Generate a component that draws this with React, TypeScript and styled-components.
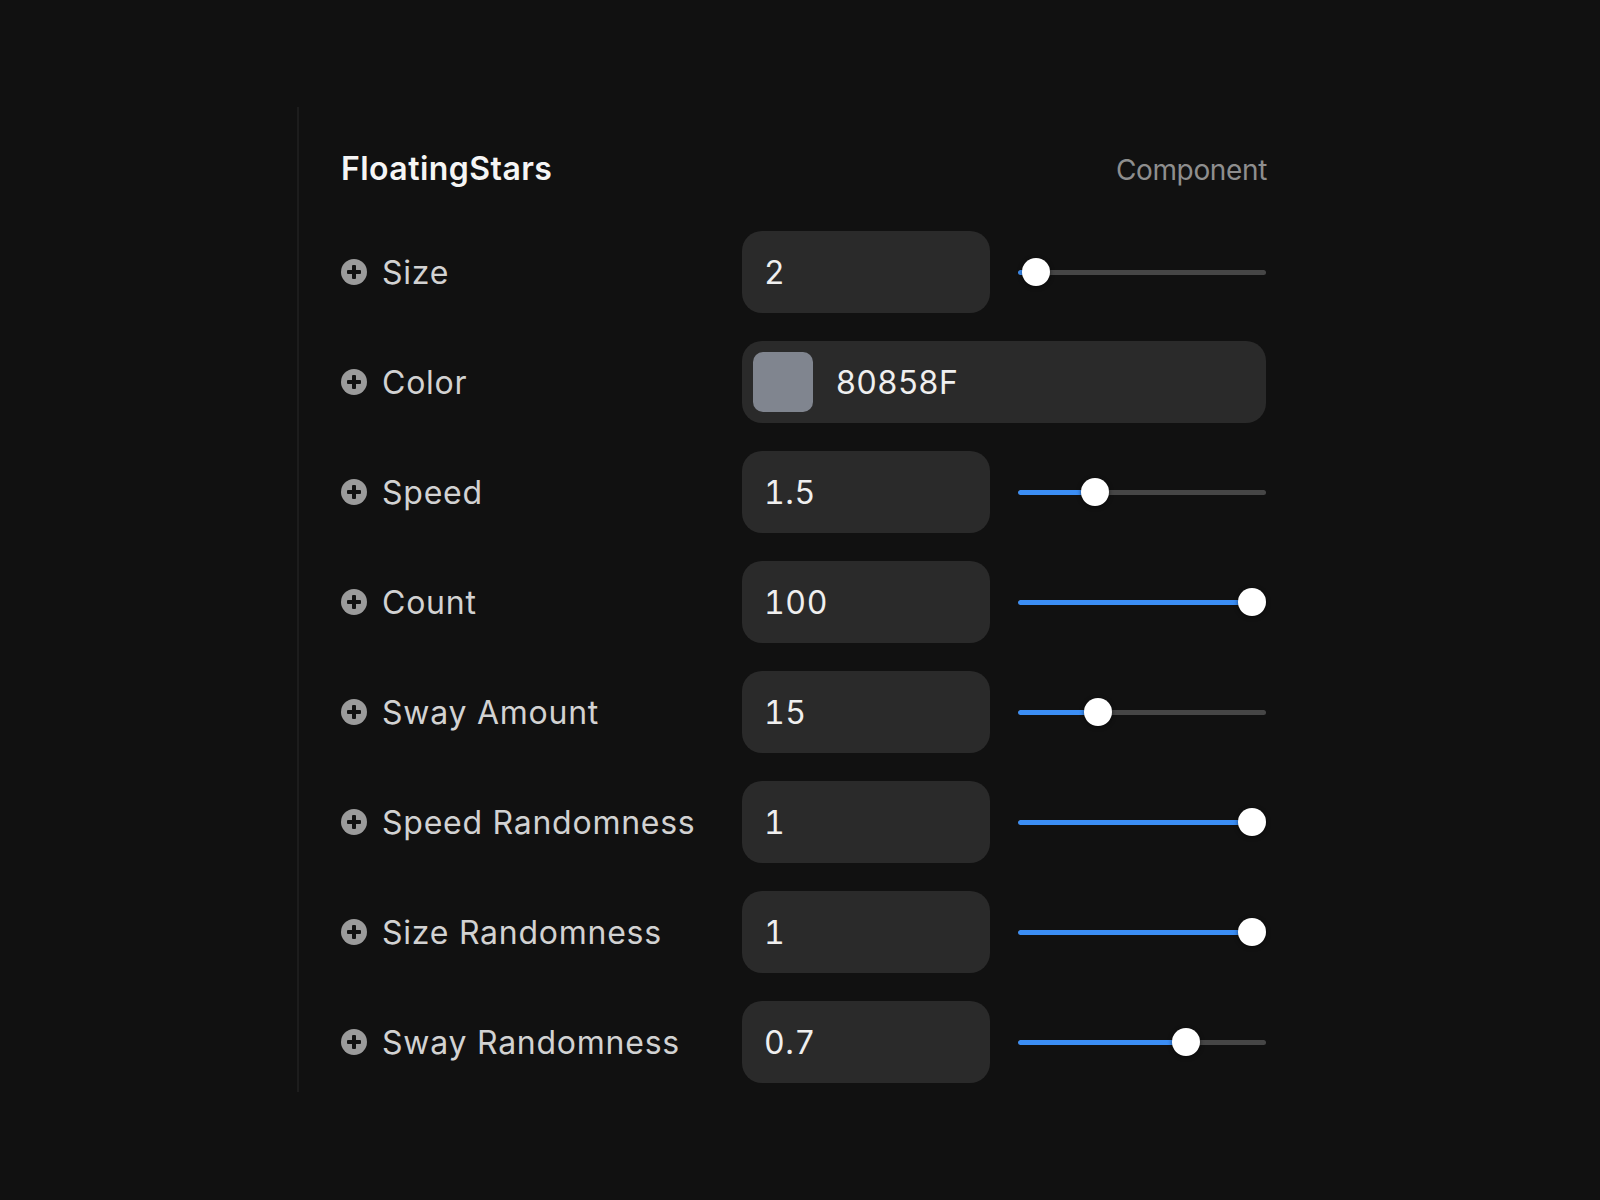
import React from "react";
import styled, { createGlobalStyle } from "styled-components";

const GlobalStyle = createGlobalStyle`
  html, body {
    margin: 0;
    padding: 0;
    background: #111111;
  }
  body {
    font-family: Inter, "Noto Sans", "Liberation Sans", sans-serif;
    color: #ececec;
  }
`;

const Page = styled.div`
  width: 1600px;
  height: 1200px;
  background: #111111;
  padding: 107px 0 0 297px;
  box-sizing: border-box;
`;

const Panel = styled.section`
  width: 1011px;
  box-sizing: border-box;
  border-left: 2px solid #1d1d1d;
  padding: 42px 0 9px 42px;
`;

const Inner = styled.div`
  width: 925px;
`;

const Header = styled.div`
  display: flex;
  justify-content: space-between;
  align-items: baseline;
  height: 40px;
  line-height: 40px;
  margin-bottom: 42px;
`;

const Title = styled.h1`
  margin: 0;
  font-size: 32px;
  font-weight: 600;
  color: #f5f5f5;
  letter-spacing: 0.45px;
`;

const Kind = styled.span`
  font-size: 28px;
  font-weight: 400;
  color: #8e8e8e;
  letter-spacing: -0.35px;
  margin-right: -1px;
`;

const Rows = styled.div`
  display: flex;
  flex-direction: column;
  gap: 28px;
`;

const Row = styled.div`
  display: flex;
  align-items: center;
  height: 82px;
`;

const Label = styled.div`
  width: 401px;
  display: flex;
  align-items: center;
  gap: 15px;
  font-size: 32px;
  font-weight: 400;
  color: #d2d2d2;
  letter-spacing: 0.75px;
`;

const Controls = styled.div`
  flex: 1;
  display: grid;
  grid-template-columns: 248px 248px;
  column-gap: 28px;
  align-items: center;
  height: 100%;
`;

const NumberBox = styled.div`
  height: 82px;
  border-radius: 20px;
  background: #2a2a2a;
  display: flex;
  align-items: center;
  padding-left: 22px;
  font-size: 32px;
  font-weight: 400;
  color: #efefef;
  box-sizing: border-box;
  font-variant-numeric: tabular-nums;
  letter-spacing: 0.6px;
`;

const ColorBox = styled.div`
  grid-column: 1 / span 2;
  height: 82px;
  border-radius: 20px;
  background: #2a2a2a;
  display: flex;
  align-items: center;
  padding-left: 11px;
  gap: 23px;
  font-size: 32px;
  color: #efefef;
  box-sizing: border-box;
  letter-spacing: 0.8px;
`;

const Swatch = styled.div<{ $color: string }>`
  width: 60px;
  height: 60px;
  border-radius: 10px;
  background: ${(p) => p.$color};
`;

const SliderWrap = styled.div`
  position: relative;
  height: 28px;
  display: flex;
  align-items: center;
`;

const Track = styled.div`
  width: 100%;
  height: 5px;
  border-radius: 3px;
  background: #464646;
  overflow: hidden;
`;

const Fill = styled.div`
  height: 100%;
  background: #3b8ef5;
  border-radius: 3px;
`;

const Thumb = styled.div`
  position: absolute;
  top: 0;
  width: 28px;
  height: 28px;
  margin-left: -14px;
  border-radius: 50%;
  background: #ffffff;
  box-shadow: 0 1px 4px rgba(0, 0, 0, 0.55);
`;

const PlusIcon = () => (
  <svg width="26" height="26" viewBox="0 0 26 26" aria-hidden="true">
    <circle cx="13" cy="13" r="13" fill="#9b9b9b" />
    <rect x="11" y="6" width="4" height="14" rx="1" fill="#111111" />
    <rect x="6" y="11" width="14" height="4" rx="1" fill="#111111" />
  </svg>
);

const Slider = ({ fraction }: { fraction: number }) => {
  const center = 14 + fraction * (248 - 28);
  return (
    <SliderWrap>
      <Track>
        <Fill style={{ width: `${center}px` }} />
      </Track>
      <Thumb style={{ left: `${center}px` }} />
    </SliderWrap>
  );
};

type Prop =
  | { kind: "number"; label: string; value: string; fraction: number }
  | { kind: "color"; label: string; value: string; color: string };

const props: Prop[] = [
  { kind: "number", label: "Size", value: "2", fraction: 0.02 },
  { kind: "color", label: "Color", value: "80858F", color: "#80858F" },
  { kind: "number", label: "Speed", value: "1.5", fraction: 0.288 },
  { kind: "number", label: "Count", value: "100", fraction: 1 },
  { kind: "number", label: "Sway Amount", value: "15", fraction: 0.3 },
  { kind: "number", label: "Speed Randomness", value: "1", fraction: 1 },
  { kind: "number", label: "Size Randomness", value: "1", fraction: 1 },
  { kind: "number", label: "Sway Randomness", value: "0.7", fraction: 0.7 },
];

export default function App() {
  return (
    <>
      <GlobalStyle />
      <Page>
        <Panel>
          <Inner>
            <Header>
              <Title>FloatingStars</Title>
              <Kind>Component</Kind>
            </Header>
            <Rows>
              {props.map((p) => (
                <Row key={p.label}>
                  <Label>
                    <PlusIcon />
                    {p.label}
                  </Label>
                  <Controls>
                    {p.kind === "color" ? (
                      <ColorBox>
                        <Swatch $color={p.color} />
                        {p.value}
                      </ColorBox>
                    ) : (
                      <>
                        <NumberBox>{p.value}</NumberBox>
                        <Slider fraction={p.fraction} />
                      </>
                    )}
                  </Controls>
                </Row>
              ))}
            </Rows>
          </Inner>
        </Panel>
      </Page>
    </>
  );
}
